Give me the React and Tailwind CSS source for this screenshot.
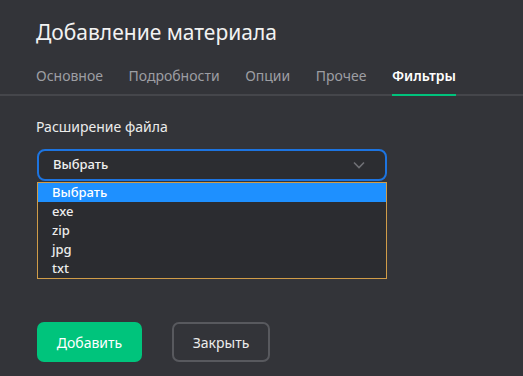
import React, { useState } from 'react';

const tabs = ['Основное', 'Подробности', 'Опции', 'Прочее', 'Фильтры'];
const options = ['Выбрать', 'exe', 'zip', 'jpg', 'txt'];

const App = () => {
  const [active, setActive] = useState('Фильтры');
  const [selected, setSelected] = useState('Выбрать');

  return (
    <div className="w-[523px] h-[376px] bg-[#333439] text-white overflow-hidden" style={{ fontFamily: '"Noto Sans", "Open Sans", sans-serif' }}>
      <h1 className="pl-9 pt-[18px] text-[21px] leading-[28px] text-[#f2f2f2]">Добавление материала</h1>

      <div className="mt-[20px] flex gap-[25.5px] pl-9 border-b-2 border-[#45464b]">
        {tabs.map((t) => (
          <button
            key={t}
            onClick={() => setActive(t)}
            className={
              'pb-[8px] -mb-[2px] text-[14px] leading-[20px] border-b-2 ' +
              (active === t ? 'text-white font-semibold border-[#00c27c]' : 'text-[#9d9ea3] border-transparent')
            }
          >
            {t}
          </button>
        ))}
      </div>

      <div className="px-9 pt-[21px]">
        <div className="text-[14px] leading-[20px] text-[#ececec]">Расширение файла</div>

        <div className="mt-[12px] w-[350px] ml-px">
          <div className="h-[32px] flex items-center justify-between px-[14px] rounded-[8px] border-2 border-[#1d74e0] bg-[#2c2d31]">
            <span className="text-[13px] font-medium text-[#f0f0f0]">{selected}</span>
            <svg width="12" height="8" viewBox="0 0 12 8" className="mr-[6px]">
              <path d="M1 1.5l5 5 5-5" fill="none" stroke="#6f7075" strokeWidth="1.6" />
            </svg>
          </div>
          <div className="mt-[1px] border border-[#d09c48] bg-[#2b2c30]">
            {options.map((o, i) => (
              <div
                key={o}
                onClick={() => setSelected(o)}
                className={
                  'h-[19px] leading-[19px] pl-[14px] text-[13px] font-medium ' +
                  (i === 0 ? 'bg-[#1e90ff] text-white' : 'text-[#ececec]')
                }
              >
                {o}
              </div>
            ))}
          </div>
        </div>

        <div className="mt-[43px] ml-px flex gap-[30px]">
          <button className="w-[105px] h-[40px] rounded-[7px] bg-[#00c47c] text-[14px] text-white">Добавить</button>
          <button className="w-[98px] h-[40px] rounded-[7px] border-2 border-[#58595e] text-[14px] text-[#ececec]">Закрыть</button>
        </div>
      </div>
    </div>
  );
};

export default App;
